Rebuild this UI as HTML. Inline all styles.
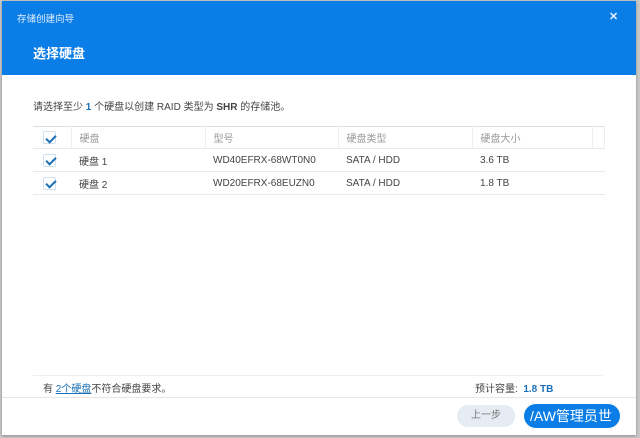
<!DOCTYPE html>
<html><head><meta charset="utf-8"><style>
*{margin:0;padding:0;box-sizing:border-box}
body{width:640px;height:438px;background:#c9c9c9;position:relative;overflow:hidden;font-family:"Liberation Sans","Noto Sans CJK SC",sans-serif;color:#444;font-size:10px}
.dlg{position:absolute;left:2px;top:1px;width:634px;height:434px;background:#fff;box-shadow:0 1px 3px #888}
.hd{position:absolute;left:0;top:0;width:634px;height:74px;background:#0a7de6;color:#fff}
.t1{position:absolute;left:15px;top:10px;font-size:9.5px;color:#e6f0ff}
.t2{position:absolute;left:31px;top:42px;font-size:13px;font-weight:bold}
.x{position:absolute;left:607px;top:9px;font-size:11px;font-weight:bold;color:#e8f2ff}
.ins{position:absolute;left:31px;top:97px;font-size:10px}
.b{color:#1a6fb6;font-weight:bold}
table{position:absolute;left:31px;top:125px;width:572px;border-collapse:collapse}
td{height:23px;border-bottom:1px solid #e9e9e9;font-size:10px;padding-left:8px;color:#444;vertical-align:middle}
tr.h td{color:#999;border-top:1px solid #ddd;border-right:1px solid #eee;height:22px}
.ck{width:38px;padding-left:10px}
.cb{display:block;width:13px;height:13px;border:1px solid #cfe0ef;border-radius:2px;position:relative;background:#fff}
.cb:after{content:"";position:absolute;left:3.5px;top:0.5px;width:4px;height:8px;border:solid #1a6fb6;border-width:0 2px 2px 0;transform:rotate(45deg)}
.ft{position:absolute;left:31px;top:374px;width:570px;border-top:1px solid #eee;height:20px}
.sep{position:absolute;left:0;top:396px;width:634px;border-top:1px solid #e6e6e6}
.btn1{position:absolute;left:455px;top:404px;width:58px;height:22px;border-radius:11px;background:#e6ecf3;color:#777;text-align:center;line-height:22px;font-size:10px}
.btn2{position:absolute;left:522px;top:403px;width:96px;height:24px;border-radius:12px;background:#0a7de6;color:#fff;line-height:24px;font-size:14px;padding-left:6px}
</style></head><body>
<div class="dlg">
<div class="hd"><div class="t1">存储创建向导</div><div class="t2">选择硬盘</div><div class="x">✕</div></div>
<div class="ins">请选择至少 <span class="b">1</span> 个硬盘以创建 RAID 类型为 <b>SHR</b> 的存储池。</div>
<table>
<tr class="h"><td class="ck"><span class="cb"></span></td><td style="width:134px">硬盘</td><td style="width:133px">型号</td><td style="width:134px">硬盘类型</td><td style="width:120px">硬盘大小</td><td></td></tr>
<tr><td class="ck"><span class="cb"></span></td><td>硬盘 1</td><td>WD40EFRX-68WT0N0</td><td>SATA / HDD</td><td>3.6 TB</td><td></td></tr>
<tr><td class="ck"><span class="cb"></span></td><td>硬盘 2</td><td>WD20EFRX-68EUZN0</td><td>SATA / HDD</td><td>1.8 TB</td><td></td></tr>
</table>
<div class="ft"><span style="position:absolute;left:10px;top:4px">有 <u style="color:#1a6fb6">2个硬盘</u>不符合硬盘要求。</span><span style="position:absolute;left:442px;top:4px">预计容量: &nbsp;<span class="b">1.8 TB</span></span></div>
<div class="sep"></div>
<div class="btn1">上一步</div>
<div class="btn2">/AW管理员世</div>
</div>
</body></html>
